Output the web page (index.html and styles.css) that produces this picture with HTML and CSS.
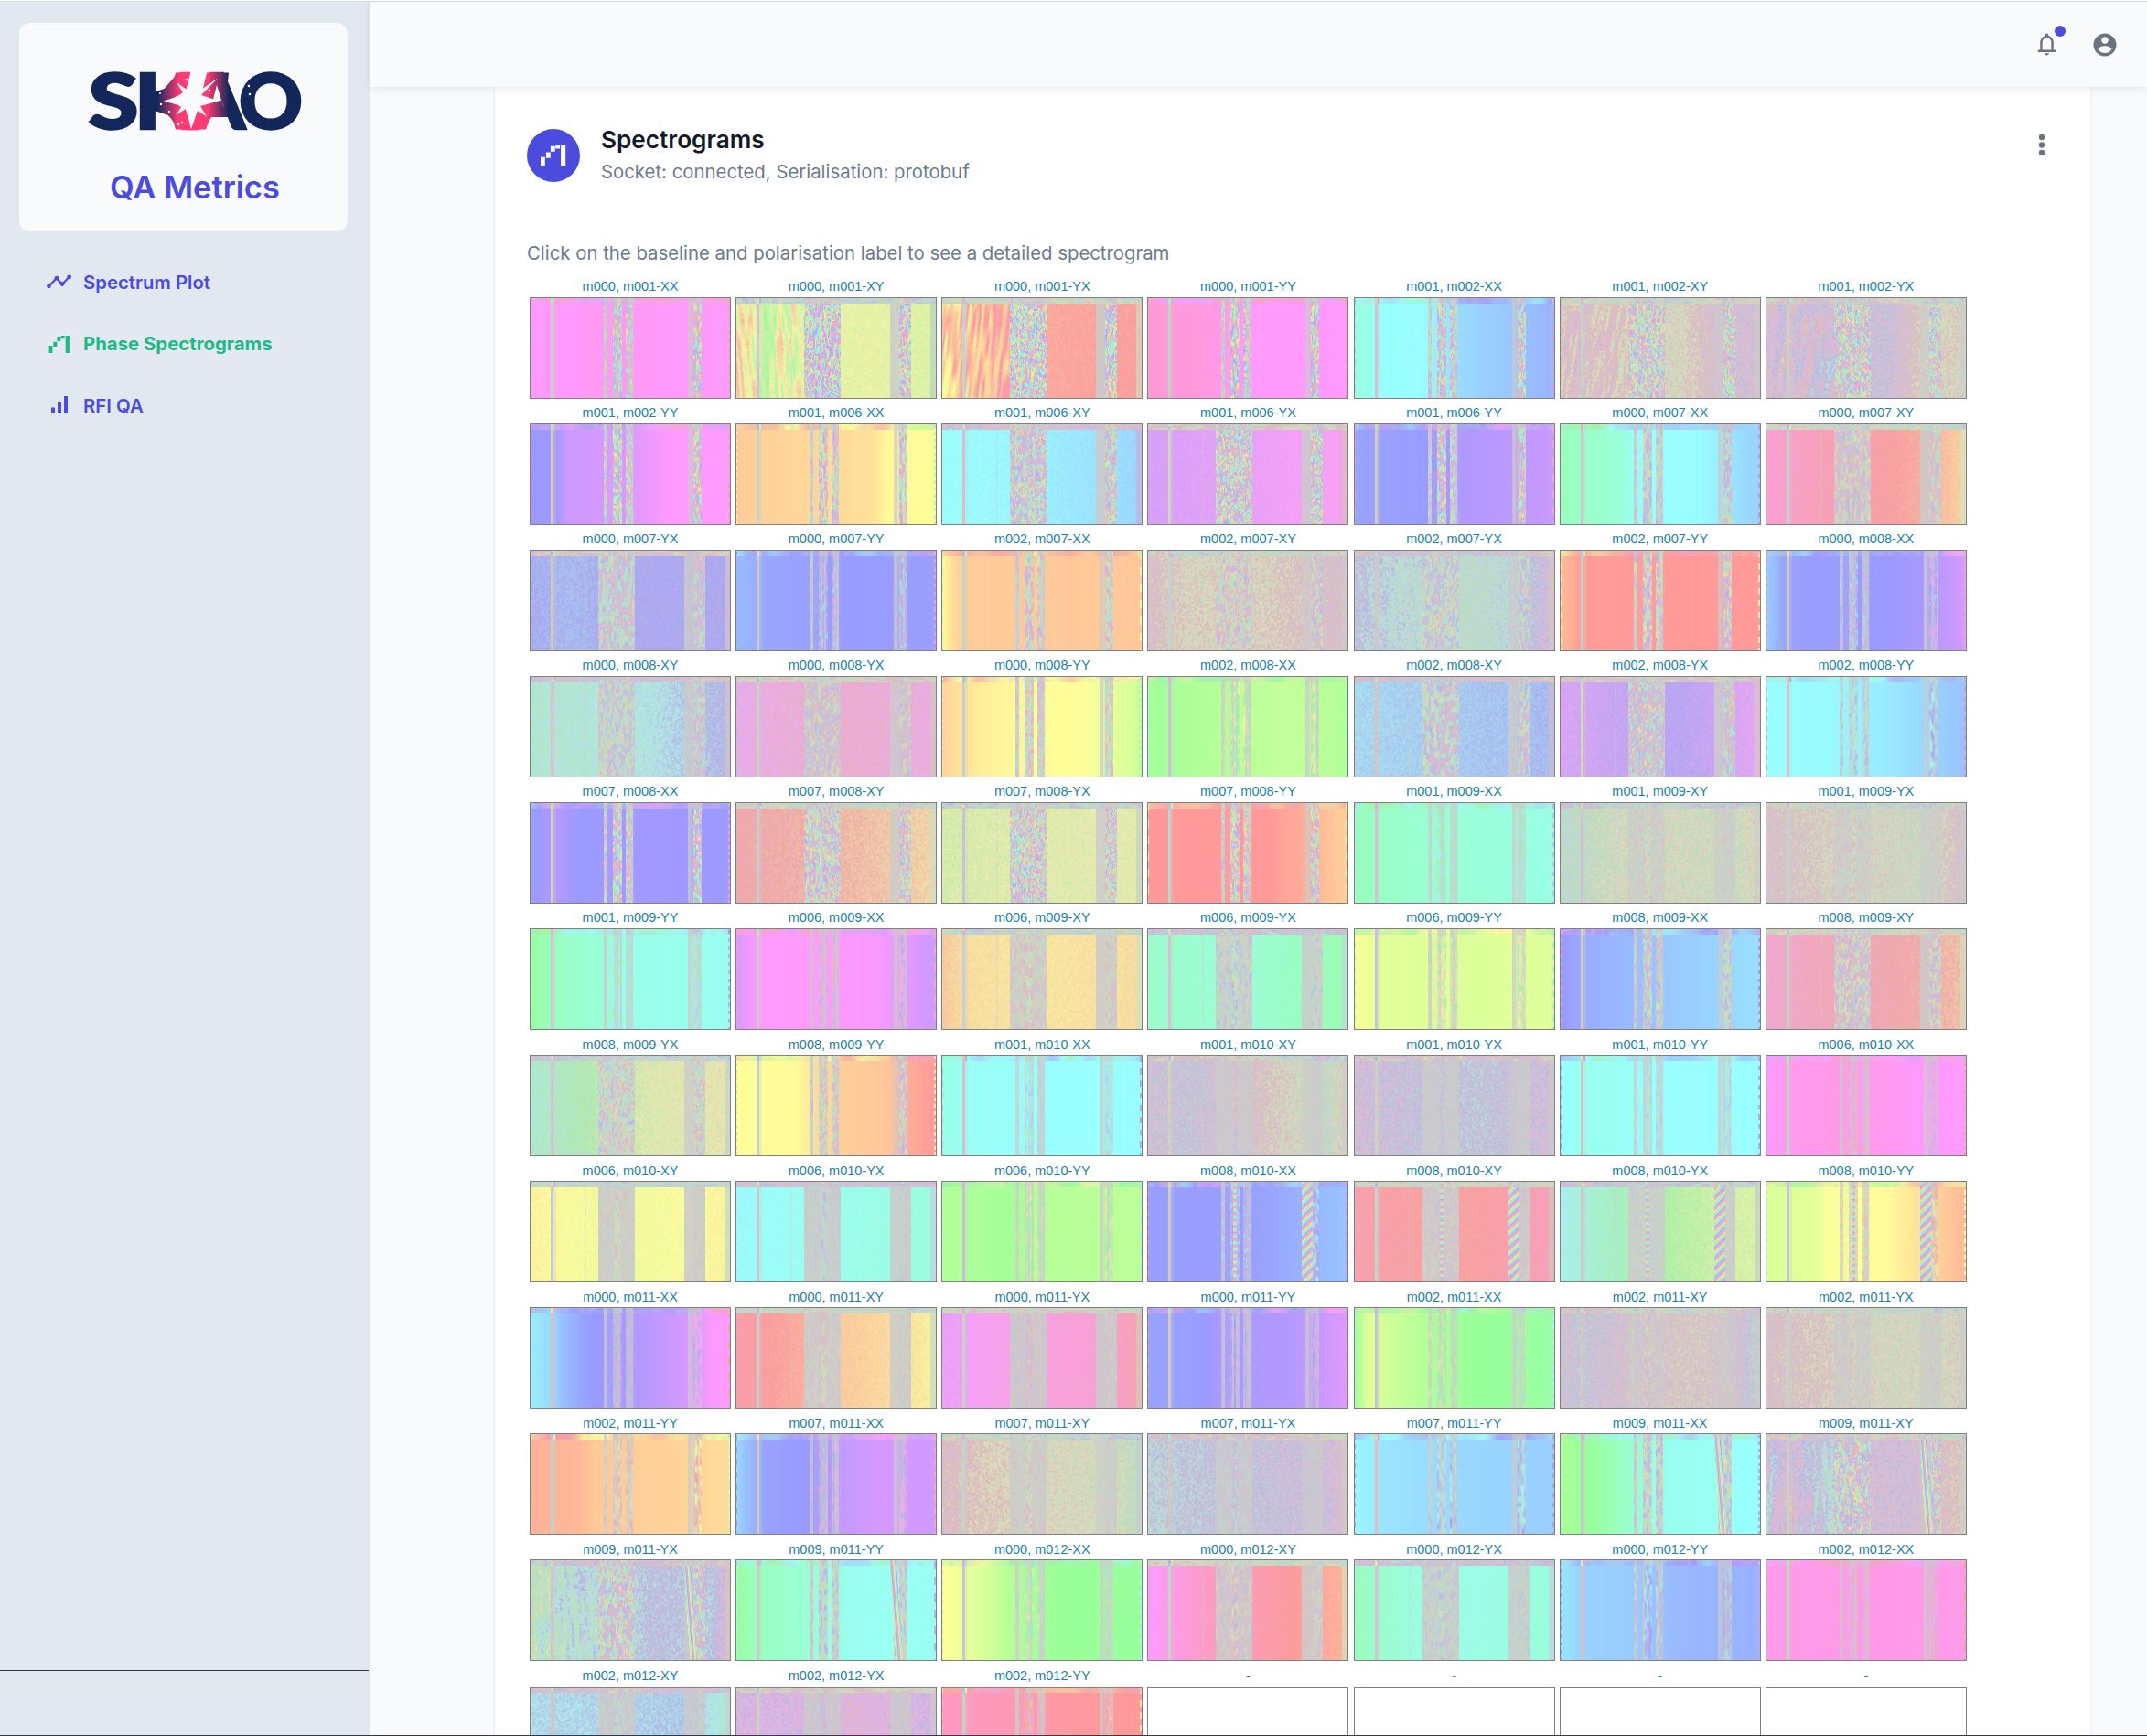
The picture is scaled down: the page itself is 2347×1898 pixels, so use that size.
FILE: index.html
```html
<!DOCTYPE html>
<html lang="en">
<head>
<meta charset="utf-8">
<title>QA Metrics - Spectrograms</title>
<link rel="stylesheet" href="styles.css">
</head>
<body>
<svg width="0" height="0" class="defs" aria-hidden="true">
  <symbol id="waterfall" viewBox="0 0 24 20"><path d="M0 11h4v8H0zM4.9 6.7h4v5.2h-4zM9 1h4v5H9zM13.4 0h4v3.3h-4zM18.3 0h4.2v19h-4.2z"/></symbol>
</svg>
<div class="app">
  <aside class="sidebar">
    <div class="brand">
      <svg class="logo" width="236" height="70" viewBox="95 76 236 70" role="img" aria-label="SKAO">
        <defs>
          <linearGradient id="gk" gradientUnits="userSpaceOnUse" x1="172" y1="0" x2="196" y2="0"><stop offset="0" stop-color="#13275a"/><stop offset="1" stop-color="#ff3b74"/></linearGradient>
          <linearGradient id="ga" gradientUnits="userSpaceOnUse" x1="227" y1="0" x2="250" y2="0"><stop offset="0" stop-color="#ff3b74"/><stop offset="1" stop-color="#13275a"/></linearGradient>
        </defs>
        <g class="logo-letters">
          <text x="96.500" y="141" textLength="55" lengthAdjust="spacingAndGlyphs" stroke="#13275a">S</text>
          <text x="147" y="141" textLength="66" lengthAdjust="spacingAndGlyphs" fill="url(#gk)" stroke="url(#gk)">K</text>
          <text x="206" y="141" textLength="62" lengthAdjust="spacingAndGlyphs" fill="url(#ga)" stroke="url(#ga)">A</text>
          <text x="261" y="141" textLength="70" lengthAdjust="spacingAndGlyphs" stroke="#13275a">O</text>
        </g>
        <path fill="url(#gk)" d="M169 100.500L184 95.500Q189 93 192 79.500H208.500L203 99L196 104L182 110.500L196 116L203 119L209 141.500H192Q189 128 184 126L169 121z"/>
        <path fill="url(#ga)" d="M226 79.500H250L248 98L242 109.500L246 121L234 125Q230 127 225 141.500H209L217 119z"/>
        <path fill="#f9fafc" d="M179 110.500L201 103L193 90L204 98L208.500 78H226L220 98L238 85.500L220 104L233 108L237 93L242 109.500L219 116L226 127.500L216 121L209 141L203 119L192 126L199 116z"/>
        <path fill="url(#ga)" d="M222 104L236 94L233 108.500z"/>
        <g fill="#f9fafc"><circle cx="204" cy="87" r="1.300"/><circle cx="229" cy="99" r="1.300"/><circle cx="175" cy="102" r="1"/><circle cx="176" cy="114" r="1.200"/><circle cx="185" cy="122" r="1.200"/><circle cx="195" cy="136" r="1.300"/><circle cx="199" cy="134" r="1.200"/><circle cx="272" cy="94" r="1.300"/><circle cx="273" cy="103" r="1.300"/></g>
      </svg>
      <div class="brand-name">QA Metrics</div>
    </div>
    <nav class="nav">
      <a class="nav-item"><svg class="nav-icon" width="30" height="24" viewBox="0 0 30 24"><path d="M3.500 16.800L12 8.200L18 14.800L25.700 6.800" fill="none" stroke="currentColor" stroke-width="2.200"/><g><circle cx="3.500" cy="16.800" r="2.400"/><circle cx="12" cy="8.200" r="2.400"/><circle cx="18" cy="14.500" r="2.400"/><circle cx="25.700" cy="6.800" r="2.400"/></g></svg><span>Spectrum Plot</span></a>
      <a class="nav-item active"><svg class="nav-icon" width="30" height="24" viewBox="0 0 30 24"><use href="#waterfall" x="3.400" y="3" width="24" height="20"/></svg><span>Phase Spectrograms</span></a>
      <a class="nav-item"><svg class="nav-icon" width="30" height="24" viewBox="0 0 30 24"><path d="M6 14.500h4V21H6zM13 8.500h4V21h-4zM20 2h4v19h-4z"/></svg><span>RFI QA</span></a>
    </nav>
    <div class="sidebar-foot"></div>
  </aside>
  <div class="main">
    <header class="topbar">
      <div class="bell">
        <svg width="29" height="29" viewBox="0 0 24 24"><path d="M4 19v-2h2v-7q0-2.075 1.250-3.687Q8.500 4.700 10.500 4.200v-.7q0-.625.438-1.062Q11.375 2 12 2t1.062.438q.438.437.438 1.062v.7q2 .5 3.250 2.113Q18 7.925 18 10v7h2v2ZM12 22q-.825 0-1.412-.587Q10 20.825 10 20h4q0 .825-.587 1.413Q12.825 22 12 22Zm-4-5h8v-7q0-1.650-1.175-2.825Q13.650 6 12 6q-1.650 0-2.825 1.175Q8 8.350 8 10Z"/></svg>
        <i class="badge"></i>
      </div>
      <svg width="30" height="30" viewBox="0 0 24 24"><path d="M12 2C6.480 2 2 6.480 2 12s4.480 10 10 10 10-4.480 10-10S17.520 2 12 2zm0 3c1.660 0 3 1.340 3 3s-1.340 3-3 3-3-1.340-3-3 1.340-3 3-3zm0 14.200c-2.500 0-4.710-1.280-6-3.220.03-1.990 4-3.080 6-3.080 1.990 0 5.970 1.090 6 3.080-1.290 1.940-3.500 3.220-6 3.220z"/></svg>
    </header>
    <section class="card">
      <div class="card-head">
        <div class="avatar"><svg width="29" height="25" viewBox="0 0 24 20"><use href="#waterfall" width="24" height="20"/></svg></div>
        <div class="card-titles">
          <h1>Spectrograms</h1>
          <p>Socket: connected, Serialisation: protobuf</p>
        </div>
        <svg class="more" width="8" height="26" viewBox="0 0 8 26"><circle cx="4" cy="4" r="3.200"/><circle cx="4" cy="12.500" r="3.200"/><circle cx="4" cy="21" r="3.200"/></svg>
      </div>
      <p class="hint">Click on the baseline and polarisation label to see a detailed spectrogram</p>
      <div class="grid" id="grid"></div>
    </section>
  </div>
</div>
<script src="spectrograms.js"></script>
</body>
</html>
```
FILE: styles.css
```css
* { box-sizing: border-box; }
body {
  margin: 0;
  height: 1898px;
  overflow: hidden;
  background: #f9fafc;
  font-family: Inter, "Liberation Sans", sans-serif;
  border-bottom: 1px solid #3d3448;
}
.defs { display: block; }
.app {
  display: flex;
  height: 1897px;
  border-top: 1px solid #fff;
  overflow: hidden;
}
.sidebar {
  width: 405px;
  flex: none;
  display: flex;
  flex-direction: column;
  padding-top: 23px;
  border-top: 1px solid #d8dce1;
  background: #e1e8f0;
}
.brand {
  width: 359px;
  height: 228px;
  margin-left: 21px;
  padding-left: 25px;
  padding-top: 51px;
  display: flex;
  flex-direction: column;
  align-items: center;
  border-radius: 12px;
  background: #f9fafc;
}
.logo { flex: none; }
.logo-letters {
  font: 900 84px Lato, sans-serif;
  fill: #13275a;
  stroke-width: 2.5px;
}
.brand-name {
  margin-top: 36px;
  font-size: 34.6px;
  line-height: 44px;
  font-weight: 600;
  color: #4b4bde;
}
.nav {
  margin: 24px 0 0 21px;
  display: flex;
  flex-direction: column;
  gap: 5.5px;
  flex: 1;
}
.nav-item {
  width: 359px;
  height: 62px;
  padding-left: 29px;
  display: flex;
  align-items: center;
  gap: 11px;
  border-radius: 12px;
  color: #4b4bde;
  font-size: 20.35px;
  font-weight: 600;
}
.nav-icon { fill: currentColor; flex: none; }
.nav-item.active {
  background: #e4e9f1;
  color: #1dba85;
  font-weight: 700;
}
.sidebar-foot {
  width: 403px;
  height: 71px;
  border-top: 1px solid #2d3748;
}
.main {
  flex: 1;
  display: flex;
  flex-direction: column;
  border-top: 1px solid #d8dce1;
}
.topbar {
  height: 93px;
  flex: none;
  display: flex;
  justify-content: flex-end;
  align-items: center;
  gap: 34px;
  padding-right: 31px;
  background: #f9fafc;
  fill: #6b7280;
  box-shadow: 0 1px 10px rgba(60, 70, 90, .13);
  z-index: 1;
}
.topbar svg { display: block; }
.bell { position: relative; }
.badge {
  position: absolute;
  left: 23px;
  top: -6px;
  width: 12px;
  height: 12px;
  border-radius: 6px;
  background: #4b4bde;
}
.card {
  width: 1744px;
  flex: 1;
  margin-left: 136px;
  padding: 46px 35px 0;
  background: #fff;
  box-shadow: 0 1px 3px rgba(60, 70, 90, .12);
}
.card-head {
  display: flex;
  align-items: flex-start;
  height: 110px;
  color: #6b7a90;
}
.avatar {
  width: 58px;
  height: 58px;
  border-radius: 50%;
  display: flex;
  align-items: center;
  justify-content: center;
  background: #4b4bde;
  fill: #fff;
}
.card-titles { flex: 1; padding-left: 23px; }
h1 {
  margin: -5px 0 0;
  font-size: 26.2px;
  line-height: 34px;
  font-weight: 600;
  color: #121828;
}
p {
  margin: 0;
  font-size: 20.35px;
  line-height: 34px;
  color: #6b7a90;
}
.card-titles p { padding-top: 1px; }
.more { margin: 5px 14px 0 0; fill: #6b7280; }
.card .hint { height: 47px; padding-top: 9px; }
.grid {
  margin-left: 3px;
  margin-top: -.6px;
  display: grid;
  grid-template-columns: repeat(7, 220px);
  column-gap: 5.15px;
}
.tile { margin: 0; }
.tile figcaption {
  height: 27.1px;
  padding-top: 7.6px;
  text-align: center;
  font: 14.5px/17px "Liberation Sans", Arial, sans-serif;
  color: #1c7fab;
}
.tile canvas {
  display: block;
  width: 220px;
  height: 111px;
  border: 1px solid #808080;
}
```
FILE: spectrograms.js
```js
// label | hue stops (position:hue) | clarity | fringe vividness | fringe slope | low-band streaks
const tiles = `
m000, m001-XX|0:300 .2:300 .3:308 .6:304 .7:300 .85:306 1:300|1|.7|.1|0
m000, m001-XY|0:50 .15:75 .7:68 1:80|.75|.85|.2|.35
m000, m001-YX|0:40 .2:15 .5:8 1:0|.9|.85|-.3|.25
m000, m001-YY|0:325 .3:318 .5:302 1:300|1|.85|.1|0
m001, m002-XX|0:160 .1:175 .35:182 .5:200 .8:215 1:225|1|.8|.3|.02
m001, m002-XY|0:350 .3:30 .6:60 .8:300 1:290|.2|.65|-.4|.6
m001, m002-YX|0:320 .3:270 .6:260 .8:50 1:40|.2|.65|-.5|.6
m001, m002-YY|0:240 .13:245 .18:270 .5:280 .7:300 1:300|1|.8|-.2|0
m001, m006-XX|0:30 .5:39 .68:42 .75:55 1:60|1|.7|.1|0
m001, m006-XY|0:178 .5:188 1:204|.95|.6|.5|0
m001, m006-YX|0:277 .5:290 1:305|.85|.7|.5|0
m001, m006-YY|0:234 .35:238 .5:252 1:268|1|.7|-.3|0
m000, m007-XX|0:140 .3:158 .38:178 .7:182 1:208|1|.5|0|0
m000, m007-XY|0:325 .3:345 .6:358 .8:10 1:35|.85|.35|.1|0
m000, m007-YX|0:235 .2:225 .5:242 1:245|.7|.4|.1|0
m000, m007-YY|0:220 .15:232 .5:238 1:237|1|.4|.1|0
m002, m007-XX|0:57 .05:40 .1:30 1:27|1|.55|-.2|0
m002, m007-XY|0:340 .2:50 .6:35 1:320|.2|.42|.4|.1
m002, m007-YX|0:230 .2:180 .6:150 .85:200 1:310|.25|.42|.3|.2
m002, m007-YY|0:22 .1:2 1:0|1|.65|-.2|0
m000, m008-XX|0:210 .1:236 .5:238 .8:250 1:277|1|.45|.1|0
m000, m008-XY|0:155 .3:165 .6:180 .8:215 1:240|.5|.38|.5|0
m000, m008-YX|0:295 .2:315 .6:325 1:310|.6|.35|.5|0
m000, m008-YY|0:35 .2:50 .4:58 .7:60 .85:75 1:90|1|.5|.2|0
m002, m008-XX|0:115 .3:105 .7:95 1:105|1|.45|.3|0
m002, m008-XY|0:200 .5:212 1:225|.7|.45|.3|0
m002, m008-YX|0:280 .3:265 .6:255 1:290|.75|.45|.4|0
m002, m008-YY|0:180 .35:184 .6:192 1:216|1|.45|.3|0
m007, m008-XX|0:235 .12:256 .25:240 .4:246 1:242|1|.75|-.4|0
m007, m008-XY|0:355 .5:12 1:38|.7|.6|-.6|0
m007, m008-YX|0:80 .4:72 1:65|.6|.65|-.7|0
m007, m008-YY|0:0 .6:0 .75:10 1:33|1|.75|-.5|0
m001, m009-XX|0:142 .4:155 1:164|1|.25|0|0
m001, m009-XY|0:160 .3:75 .6:75 .9:90 1:30|.22|.18|.5|0
m001, m009-YX|0:330 .3:40 .6:70 .8:100 1:310|.15|.18|.5|0
m001, m009-YY|0:125 .1:142 .3:155 .5:167 1:172|1|.25|0|0
m006, m009-XX|0:278 .1:298 .3:302 .7:296 1:270|1|.35|0|0
m006, m009-XY|0:28 .12:42 .5:48 1:40|.85|.22|.3|0
m006, m009-YX|0:150 .5:155 .8:142 1:135|.95|.25|-.3|0
m006, m009-YY|0:65 .15:77 .5:80 1:79|1|.4|0|0
m008, m009-XX|0:240 .1:230 .3:222 .5:213 1:199|1|.5|.5|0
m008, m009-XY|0:328 .3:345 .6:352 1:20|.7|.45|.6|0
m008, m009-YX|0:155 .3:120 .6:72 1:58|.55|.42|.6|0
m008, m009-YY|0:60 .3:57 .38:45 .5:31 .75:27 .85:12 1:0|1|.5|.5|0
m001, m010-XX|0:165 .15:174 .5:180 1:181|1|.12|0|0
m001, m010-XY|0:280 .2:240 .5:330 .9:130 1:20|.16|.06|0|.1
m001, m010-YX|0:290 .2:255 .6:225 1:280|.22|.06|0|.1
m001, m010-YY|0:183 .1:168 .3:174 .5:181 1:180|1|.12|0|0
m006, m010-XX|0:298 .1:310 .4:315 .6:310 .75:301 1:300|1|.2|0|0
m006, m010-XY|0:55 .3:65 .6:65 1:55|.9|.12|0|0
m006, m010-YX|0:182 .3:174 .6:168 1:160|.95|.1|0|0
m006, m010-YY|0:105 .3:113 .5:103 1:98|1|.15|0|0
m008, m010-XX|0:237 .5:237 .7:228 1:215|1|.45|-.5|0
m008, m010-XY|0:350 .3:358 .6:0 1:340|.85|.15|-.8|0
m008, m010-YX|0:175 .2:150 .4:130 .6:105 1:75|.7|.15|-.8|0
m008, m010-YY|0:82 .25:76 .3:63 .6:58 .8:38 1:18|1|.4|-.6|0
m000, m011-XX|0:190 .1:203 .2:225 .3:238 .5:252 .8:277 .93:300 1:300|1|.15|0|0
m000, m011-XY|0:352 .3:8 .5:28 .8:40 1:55|.9|.12|0|0
m000, m011-YX|0:290 .25:305 .5:318 .8:325 1:350|.85|.14|0|0
m000, m011-YY|0:234 .25:237 .35:250 .7:255 1:280|1|.15|0|0
m002, m011-XX|0:115 .07:75 .15:88 .4:108 .6:120 1:126|1|.25|0|0
m002, m011-XY|0:290 .1:230 .35:330 .7:20 .9:290 1:160|.14|.15|.5|.1
m002, m011-YX|0:340 .3:25 .6:70 .9:65 .94:45 1:45|.18|.15|.5|.1
m002, m011-YY|0:15 .24:18 .32:28 .6:32 1:39|1|.3|-.2|0
m007, m011-XX|0:205 .08:225 .15:235 .35:240 .5:262 .7:275 1:272|1|.25|0|0
m007, m011-XY|0:345 .3:40 .6:60 .9:90 1:150|.25|.12|0|.1
m007, m011-YX|0:200 .2:220 .6:250 .9:275 1:340|.22|.12|0|.1
m007, m011-YY|0:185 .15:196 .5:203 1:208|1|.35|0|0
m009, m011-XX|0:110 .15:122 .35:152 .5:170 .8:174 1:180|1|.55|.3|0
m009, m011-XY|0:230 .1:320 .3:200 .5:295 .7:280 1:30|.22|.55|.1|.5
m009, m011-YX|0:100 .2:180 .5:190 .6:235 .9:215 1:330|.3|.55|.1|.5
m009, m011-YY|0:125 .1:142 .4:160 .6:172 1:174|1|.5|.2|0
m000, m012-XX|0:60 .12:72 .25:88 .35:105 .6:120 1:122|1|.3|.2|0
m000, m012-XY|0:300 .15:318 .33:338 .6:350 .8:5 1:15|.95|.2|.3|0
m000, m012-YX|0:142 .3:162 .6:166 1:160|.95|.2|.3|0
m000, m012-YY|0:195 .1:206 .4:212 .6:222 1:226|1|.3|.1|0
m002, m012-XX|0:312 .5:315 1:312|1|.2|.2|0
m002, m012-XY|0:195 .5:203 .8:215 1:150|.55|.15|-.4|0
m002, m012-YX|0:285 .4:290 .6:310 1:275|.45|.15|-.4|0
m002, m012-YY|0:335 .3:342 .5:350 .7:357 1:0|1|.3|-.3|0
-
-
-
-`.trim().split("\n");

const W = 218, H = 109, GRAY = 203;

function hash(x, y, s) {
  let n = Math.imul(x, 374761393) + Math.imul(y, 668265263) + Math.imul(s, 974634777);
  n = Math.imul(n ^ (n >>> 13), 1274126177);
  return ((n ^ (n >>> 16)) >>> 0) / 4294967296;
}
function noise(x, y, s) {
  const i = Math.floor(x), j = Math.floor(y);
  let a = x - i, b = y - j;
  a = a * a * (3 - 2 * a);
  b = b * b * (3 - 2 * b);
  const t = hash(i, j, s) * (1 - a) + hash(i + 1, j, s) * a;
  const u = hash(i, j + 1, s) * (1 - a) + hash(i + 1, j + 1, s) * a;
  return t * (1 - b) + u * b;
}
// Interpolates between stops the short way round the wheel.
function hueAt(stops, u) {
  for (let i = 1; i < stops.length; i++) {
    const [p, h] = stops[i - 1], [q, g] = stops[i];
    if (u <= q) {
      const d = ((g - h + 540) % 360) - 180;
      return h + d * (u - p) / (q - p);
    }
  }
  return stops[stops.length - 1][1];
}
// Pastel colour wheel, faded towards grey as phase coherence drops.
function colour(h, s) {
  h = (((h % 360) + 360) % 360) / 60;
  return [0, 4, 2].map(o => {
    const k = (h + o) % 6;
    const c = Math.min(1, Math.max(0, Math.abs(k - 3) - 1));
    return GRAY + (153 + 102 * c - GRAY) * s;
  });
}
const inside = (u, a, b) => u >= a && u < b;

function draw(canvas, spec, seed) {
  const [label, stopText, clarity, vivid, slope, streak] = spec;
  const stops = stopText.split(" ").map(p => p.split(":").map(Number));
  const c = +clarity, v = +vivid, k = +slope, st = +streak;
  const cross = /XY|YX/.test(label);
  const diagonal = label.startsWith("m008, m010");
  const steep = label.startsWith("m009, m011");
  const ctx = canvas.getContext("2d");
  const img = ctx.createImageData(W, H);
  for (let y = 0; y < H; y++) for (let x = 0; x < W; x++) {
    const u = x / W;
    let h = hueAt(stops, u), s = c;
    h += (noise(x * .8, 0, seed) - .5) * 2;
    if (cross) {
      const g = 1 - c;
      h += (noise(x * .7, y * .5, seed + 1) - .5) * (8 + 200 * g * g);
      s *= .92 + .16 * noise(x * .8, y * .6, seed + 2);
      if (c < .4) s += .12 * hash(x >> 1, y >> 1, seed + 4);
    }
    if (st && u < .36) {
      const n = noise(x * .35 - y * k * .12, y * .04, seed + 3);
      h += (n - .5) * 260 * st;
      s += st * .25 * Math.abs(n - .5) * 2;
    }
    const mid = cross ? inside(u, .335, .52)
      : inside(u, .365, .385) || inside(u, .41, .455) || inside(u, .475, .51);
    const high = inside(u, .815, cross ? .876 : .855);
    const quiet = inside(u, cross ? .768 : .785, .815);
    if (mid || high) {
      const centre = mid ? .43 : .84;
      const bend = Math.sign(u - centre) * k;
      const n = noise(x * .42 + y * (bend * .25 + k * .1), y * .17 - x * bend * .4, seed + 5);
      const dev = (n - .5) * 620 * Math.min(1, v + .2);
      const ripple = noise(x * .5, y * .2, seed + 6);
      if (cross) {
        h += dev;
        s = v * (.4 + .6 * ripple);
        if (v < .35 && inside(u, .42, .448)) s += .3 * noise(x, y * .5, seed + 7);
      } else {
        h += dev * (v < .5 ? .25 : .75);
        const column = hash(x >> 1, 1, seed);
        s = v < .5 ? .12 + column * .55 + ripple * .25 : v * (.35 + .6 * ripple);
        if (u < .39 || inside(u, .49, .51)) s *= .6;
      }
    } else if (quiet) {
      s = cross ? .06 + .1 * noise(x * .5, y * .15, seed)
        : s * (u < .805 ? .22 + .12 * hash(x, 2, seed) : .6);
    } else if (!cross && (inside(u, .385, .41) || inside(u, .51, .52))) {
      s *= .75 + .25 * noise(x, y * .5, seed);
    }
    // Wrapped phase ramps that survive in the upper interference band.
    if (diagonal && inside(u, .77, .822)) {
      h = 360 * (x * .085 + y * .09);
      s = .62;
    } else if (diagonal && inside(u, .425, .442)) {
      h = 360 * y * .14;
      s = .5;
    } else if (steep && inside(u, .765 + .03 * y / H, .8 + .03 * y / H)) {
      h = 360 * (x * .2 - y * .016);
      s = .7;
    }
    if (inside(u, .1, .113)) { h += 150; s = .12 + .12 * hash(x, 0, seed); }
    else if (inside(u, .113, .124)) s *= .72;
    if (cross && inside(u, .268, .277)) s *= .55 + .4 * noise(x, y * .3, seed);
    if (u > .968) {
      s *= cross ? .45 : .94;
      if (cross) h += 25;
    }
    if ((x === 0 || x >= W - 2) && !cross && Math.sin(y * (.35 + (seed % 5) * .12)) > 0) h += 45;
    if (y < 6) {
      if (cross) {
        s = .1 + .25 * hash(x, y >> 1, seed);
        h += noise(x * .12, y * .5, seed + 8) * 200;
      } else {
        const n = noise(x * .05, 0, seed + 8);
        h += (n - .45) * 60;
        s *= .6 + .4 * noise(x * .2, y * .3, seed + 9);
        if (mid || high || quiet) s = .25;
      }
      if (inside(u, .1, .12)) { s = .6; h += 60; }
    }
    img.data.set([...colour(h, Math.min(1, s)), 255], (y * W + x) * 4);
  }
  ctx.putImageData(img, 0, 0);
}

const grid = document.getElementById("grid");
tiles.forEach((line, i) => {
  const spec = line.split("|");
  const tile = document.createElement("figure");
  tile.className = "tile";
  const caption = document.createElement("figcaption");
  caption.textContent = spec[0];
  const canvas = document.createElement("canvas");
  canvas.width = W;
  canvas.height = H;
  tile.append(caption, canvas);
  grid.append(tile);
  if (spec.length > 1) draw(canvas, spec, i * 17 + 3);
});
```
